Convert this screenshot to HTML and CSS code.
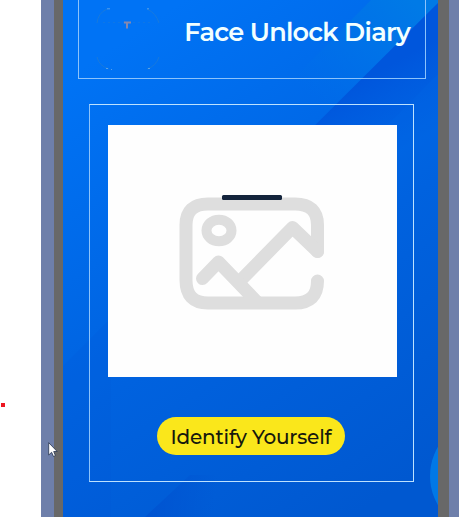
FILE: index.html
```html
<!DOCTYPE html>
<html lang="en">
<head>
<meta charset="utf-8">
<title>Face Unlock Diary</title>
<link rel="stylesheet" href="styles.css">
</head>
<body>
<div class="stage">
  <aside class="margin"><span class="dot"></span></aside>
  <main class="phone">
    <svg class="backdrop" viewBox="0 0 375 517" aria-hidden="true">
      <defs>
        <linearGradient id="base" gradientUnits="userSpaceOnUse" x1="0" y1="80" x2="290" y2="517">
          <stop offset="0" stop-color="#0073f5"/><stop offset=".55" stop-color="#0062df"/><stop offset="1" stop-color="#0058d0"/>
        </linearGradient>
        <linearGradient id="light" gradientUnits="userSpaceOnUse" x1="350" y1="0" x2="250" y2="100">
          <stop offset="0" stop-color="#007ae6"/><stop offset=".5" stop-color="#0073e8" stop-opacity=".8"/><stop offset="1" stop-color="#006fe8" stop-opacity="0"/>
        </linearGradient>
        <linearGradient id="deep" gradientUnits="userSpaceOnUse" x1="300" y1="80" x2="340" y2="150">
          <stop offset="0" stop-color="#0056dc"/><stop offset="1" stop-color="#0056dc" stop-opacity="0"/>
        </linearGradient>
        <linearGradient id="low" gradientUnits="userSpaceOnUse" x1="85" y1="510" x2="150" y2="517">
          <stop offset="0" stop-color="#0050cf" stop-opacity=".7"/><stop offset="1" stop-color="#0050cf" stop-opacity="0"/>
        </linearGradient>
      </defs>
      <path fill="url(#base)" d="M0 0h375v517H0z"/>
      <path fill="url(#light)" d="M308 0h67v3L252 125H185z"/>
      <path fill="url(#deep)" d="M375 3v147H227z"/>
      <path fill="#0068e5" opacity=".3" d="M375 74v76h-76z"/>
      <path fill="#0058d4" opacity=".14" d="M0 366L48 318V517H0z"/>
      <path fill="url(#low)" d="M82 517l45-42h80v42z"/>
      <circle fill="#0078e6" cx="424" cy="476" r="57"/>
    </svg>
    <header class="header">
      <svg class="logo" viewBox="0 0 64 64" aria-hidden="true">
        <g fill="none" stroke="#287fcf" stroke-width="1" opacity=".6">
          <path d="M1 15Q2 5 11 1M51 1q9 4 12 14M1 49q2 9 12 12M51 61q9-3 12-12"/>
          <path stroke-dasharray="2 3" opacity=".6" d="M7 14.5h50"/>
        </g>
        <path fill="none" stroke="#79b5e7" stroke-width=".7" d="M11 .8h3M51 .8h2M10 60.5h2M15 61.5h1M52 60.5h2"/>
        <path fill="#8588ad" d="M28 13.500h7v2h-3v5h-2v-5h-2z"/>
      </svg>
      <h1 class="title">Face Unlock Diary</h1>
    </header>
    <section class="card">
      <div class="preview">
        <svg class="picture" viewBox="0 0 146 116" aria-hidden="true">
          <g fill="none" stroke="#dedede" stroke-width="13" stroke-linecap="round" stroke-linejoin="round">
            <path d="M138.500 56.500V30Q138.500 9 116 9H29Q7 9 7 30V85Q7 108 29 108H116Q138.500 108 138.500 86"/>
            <path d="M138.500 56.500L113.500 32.500L61 86"/>
            <path d="M23.500 83.500L39.500 67L78 107"/>
            <ellipse cx="40" cy="35.500" rx="12.500" ry="10.800" stroke-width="10"/>
          </g>
          <rect x="43" y="0" width="60" height="5" rx="1.500" fill="#14243c"/>
        </svg>
      </div>
      <button class="identify" type="button"><span class="label">Identify Yourself</span></button>
    </section>
  </main>
  <svg class="cursor" viewBox="0 0 10 16" aria-hidden="true">
    <path d="M.7.700V13L3.600 10.300L5.500 14.500L7.400 13.600L5.700 9.500H9.200Z" fill="#fff" stroke="#26344e" stroke-width=".8"/>
  </svg>
</div>
</body>
</html>
```
FILE: styles.css
```css
* { box-sizing: border-box; }
body { margin: 0; overflow: hidden; background: #fff; }
.stage {
  position: relative;
  display: grid;
  grid-template-columns: 41px 418px;
  height: 517px;
}
.margin { padding: 403px 0 0 1px; }
.dot { display: block; width: 4px; height: 4px; background: #ed1620; }
.phone {
  position: relative;
  display: flex;
  flex-direction: column;
  min-width: 0;
  height: 517px;
  margin: 0 10px 0 13px;
  padding: 0 12px 0 15px;
  border: solid #686868;
  border-width: 0 11px 0 9px;
  box-shadow: 0 0 0 13px #6e7faa;
}
.backdrop { position: absolute; inset: 0; width: 375px; height: 517px; }
.header {
  position: relative;
  display: flex;
  justify-content: space-between;
  height: 79px;
  padding: 8px 15px 0 17px;
  border: solid #8cc3fb;
  border-width: 0 1px 1px;
}
.logo { width: 64px; height: 64px; }
.title {
  margin: 8px 0 0;
  color: #f2ffff;
  font: 600 25.6px/32px Montserrat, Lato, sans-serif;
  letter-spacing: -0.75px;
  white-space: nowrap;
}
.card {
  position: relative;
  display: flex;
  flex-direction: column;
  align-items: center;
  width: 325px;
  height: 378px;
  margin: 25px 0 0 11px;
  padding: 20px 0 0 2px;
  border: 1px solid #bde2ff;
  border-left-color: #8cc3fb;
}
.preview {
  display: grid;
  justify-items: center;
  width: 289px;
  height: 252px;
  padding: 70px 1px 0 0;
  background: #fefefe;
}
.picture { width: 146px; height: 116px; }
.identify {
  display: grid;
  place-items: center;
  width: 188px;
  height: 38px;
  margin: 40px 3px 0 0;
  padding: 1px 0 0;
  border: 0;
  border-radius: 19px;
  background: #fae71b;
}
.label {
  color: #15180d;
  font: 500 20px/24px Montserrat, Lato, sans-serif;
  letter-spacing: -0.2px;
  white-space: nowrap;
}
.cursor { position: absolute; left: 48px; top: 442px; width: 10px; height: 16px; }
```
